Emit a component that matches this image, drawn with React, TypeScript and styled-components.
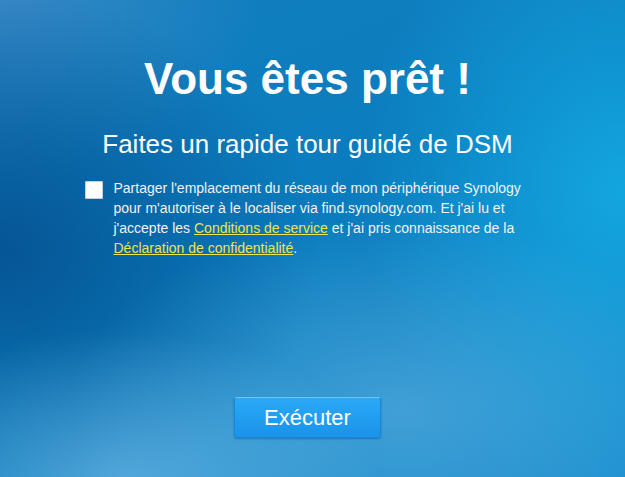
import React, { useState } from 'react';
import styled, { createGlobalStyle } from 'styled-components';

const GlobalStyle = createGlobalStyle`
  html, body {
    margin: 0;
    padding: 0;
    height: 100%;
  }

  body {
    font-family: 'Liberation Sans', Arial, sans-serif;
    overflow: hidden;
  }
`;

const Page = styled.div`
  box-sizing: border-box;
  width: 625px;
  height: 477px;
  padding: 57px 10px 39px 0;
  display: flex;
  flex-direction: column;
  align-items: center;
  color: #fff;
  background:
    radial-gradient(ellipse 260px 150px at 120px 480px, rgba(130, 195, 235, 0.55), transparent),
    radial-gradient(ellipse 330px 190px at 400px 410px, rgba(110, 185, 230, 0.5), transparent),
    radial-gradient(ellipse 260px 320px at 620px 190px, rgba(20, 172, 228, 0.85), transparent),
    radial-gradient(ellipse 320px 260px at 0px 250px, rgba(4, 78, 142, 0.85), transparent),
    radial-gradient(ellipse 260px 180px at 0px 0px, rgba(70, 140, 200, 0.7), transparent),
    linear-gradient(160deg, #137fbf 0%, #0a7cbd 45%, #1a8ccc 100%);
`;

const Title = styled.h1`
  margin: 0;
  font-size: 44px;
  line-height: 44px;
  font-weight: bold;
`;

const Subtitle = styled.h2`
  margin: 30px 0 0;
  font-size: 26px;
  line-height: 26px;
  font-weight: normal;
`;

const Consent = styled.label`
  margin-top: 21px;
  width: 446px;
  display: flex;
  align-items: flex-start;
  gap: 11px;
  font-size: 14px;
  line-height: 20px;
  color: #f2f2f2;
  cursor: pointer;
`;

const Box = styled.span<{ $checked: boolean }>`
  flex: none;
  box-sizing: border-box;
  width: 18px;
  height: 18px;
  margin-top: 3px;
  background: #fff;
  border: 1px solid #c9cfd6;
  border-radius: 1px;
  display: flex;
  align-items: center;
  justify-content: center;
  color: #1a8de8;
  font-size: 13px;
  line-height: 1;
`;

const Link = styled.a`
  color: #ede54a;
  text-decoration: underline;
`;

const RunButton = styled.button`
  margin-top: auto;
  width: 147px;
  height: 41px;
  border: 1px solid #1688dc;
  border-top-color: #6cc6fa;
  border-radius: 3px;
  background: linear-gradient(to bottom, #2aa9f6 0%, #1a93ea 100%);
  box-shadow: 0 1px 2px rgba(0, 40, 90, 0.35);
  color: #fff;
  font-family: inherit;
  font-size: 22px;
  cursor: pointer;
`;

export default function App() {
  const [checked, setChecked] = useState(false);

  return (
    <>
      <GlobalStyle />
      <Page>
        <Title>Vous êtes prêt !</Title>
        <Subtitle>Faites un rapide tour guidé de DSM</Subtitle>
        <Consent onClick={() => setChecked(!checked)}>
          <Box $checked={checked}>{checked ? '✔' : null}</Box>
          <span>
            Partager l'emplacement du réseau de mon périphérique Synology pour m'autoriser à le
            localiser via find.synology.com. Et j'ai lu et j'accepte les{' '}
            <Link>Conditions de service</Link> et j'ai pris connaissance de la{' '}
            <Link>Déclaration de confidentialité</Link>.
          </span>
        </Consent>
        <RunButton>Exécuter</RunButton>
      </Page>
    </>
  );
}
